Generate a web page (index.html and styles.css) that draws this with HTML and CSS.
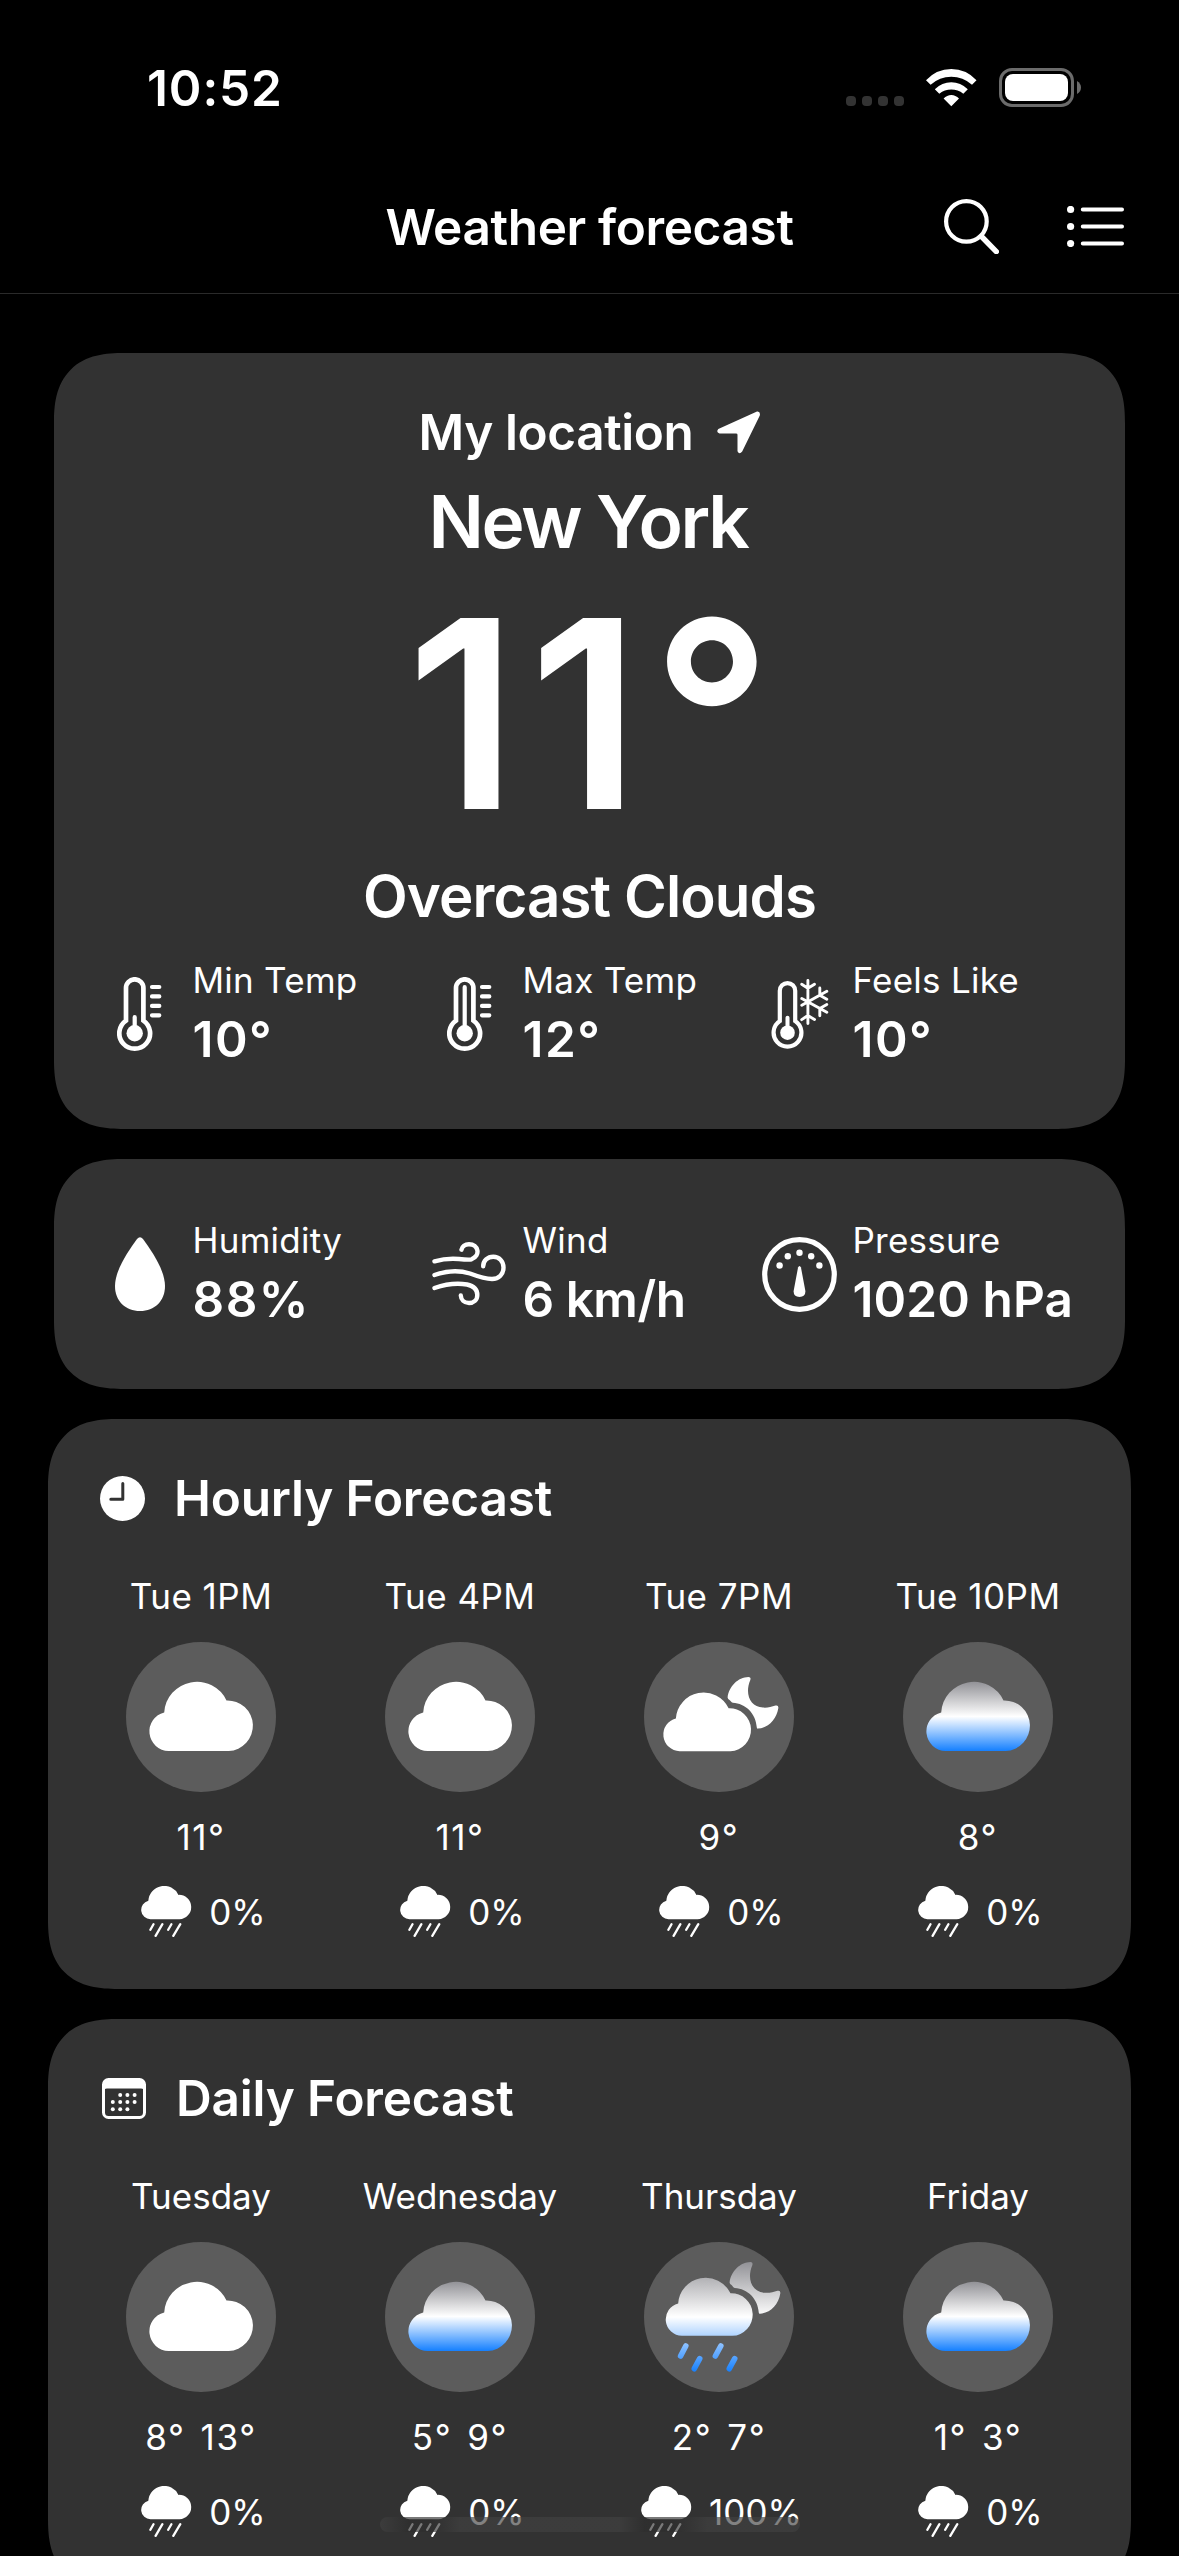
FILE: index.html
```html
<!DOCTYPE html>
<html lang="en">
<head>
<meta charset="utf-8">
<title>Weather forecast</title>
<link rel="stylesheet" href="styles.css">
</head>
<body>
<svg class="sprite" aria-hidden="true">
  <defs>
    <linearGradient id="sky" x1="0" y1="0" x2="0" y2="1">
      <stop offset="0" stop-color="#929297"/>
      <stop offset=".5" stop-color="#fff"/>
      <stop offset="1" stop-color="#1580ff"/>
    </linearGradient>
    <path id="cloud-shape" d="M19.6 69A19.6 19.6 0 0 1 15.2 30.4A32.8 32.8 0 0 1 77.5 18.4A25.3 25.3 0 0 1 79.7 69Z"/>
    <path id="moon-shape" d="M83.6 55.5C84.8 44.5 94 35 104.5 34.9Q107.3 35 106.3 38C100.5 52 106 65 119 65.6C123.5 65.9 127.5 65 131.5 63.6Q134.8 62.8 134.3 66.3C132.5 77.5 124.5 85.7 114 86.6Q112.8 86.8 112.8 85.5C112 71.5 101.5 61.5 88.8 60.8Q87.5 60.6 87 59.5Q86 58 84.2 56.9Z"/>
    <mask id="night-rain-mask" maskUnits="userSpaceOnUse" x="0" y="0" width="150" height="150">
      <g fill="#fff">
        <use href="#cloud-shape" transform="translate(21.4 35.9) scale(.84)"/>
        <use href="#moon-shape" transform="translate(2 -14.8)"/>
      </g>
      <path d="M41.8 104L36.6 114M55.7 116.7L50.3 126.7M76.8 104L71.4 114M90.7 116.7L85.3 126.7" stroke="#fff" stroke-width="5.6" stroke-linecap="round"/>
    </mask>
  </defs>
  <symbol id="cloud" viewBox="0 0 150 150"><use href="#cloud-shape" x="23" y="40"/></symbol>
  <symbol id="cloud-sky" viewBox="0 0 150 150"><use href="#cloud-shape" x="23" y="40" fill="url(#sky)"/></symbol>
  <symbol id="cloud-moon" viewBox="0 0 150 150"><use href="#cloud-shape" transform="translate(19 50.7) scale(.847)"/><use href="#moon-shape"/></symbol>
  <symbol id="night-rain" viewBox="0 0 150 150"><rect y="20" width="150" height="110" fill="url(#sky)" mask="url(#night-rain-mask)"/></symbol>
  <symbol id="rain" viewBox="0 0 51 51">
    <use href="#cloud-shape" transform="scale(.483)"/>
    <path d="M12.5 38.2L9.4 43.8M21.4 38.2L14.6 49.8M30.4 38.2L27.2 43.8M39.3 38.2L32.3 49.8" stroke="currentColor" stroke-width="2.3" stroke-linecap="round"/>
  </symbol>
</svg>

<header class="top">
  <div class="status">
    <time class="status-time">10:52</time>
    <div class="status-icons">
      <div class="signal"><i></i><i></i><i></i><i></i></div>
      <svg class="icon" width="51" height="38" viewBox="0 0 51 38"><path d="M0 11.2Q10.5 0 25.3 0T50.5 11.2L46 15.8Q37 7.8 25.3 7.8T4.6 15.8ZM8.8 20.2Q16 13.2 25.3 13.2T41.8 20.2L37.3 24.8Q32 20.6 25.3 20.6T13.3 24.8ZM17.6 29.6Q21 26 25.3 26T33 29.6L25.3 37.3Z"/></svg>
      <svg class="icon" width="82" height="39" viewBox="0 0 82 39"><rect x="1.5" y="1.5" width="72" height="36" rx="11.5" fill="none" stroke="#6b6b6b" stroke-width="3"/><rect x="6" y="6" width="63" height="27" rx="8"/><path d="M78 13Q82 15.5 82 19.5T78 26Z" fill="#6b6b6b"/></svg>
    </div>
  </div>
  <nav class="nav">
    <h1 class="nav-title">Weather forecast</h1>
    <div class="nav-actions">
      <svg class="icon icon--line" width="55" height="55" viewBox="0 0 55 55"><circle cx="22.4" cy="22.4" r="20.3" stroke-width="4.2"/><path d="M37.5 37.5L52.3 52.6" stroke-width="5.4"/></svg>
      <svg class="icon" width="57" height="41" viewBox="0 0 57 41"><circle cx="3.6" cy="3.5" r="3.6"/><circle cx="3.6" cy="20.5" r="3.6"/><circle cx="3.6" cy="37.5" r="3.6"/><path d="M15.8 3.5H55M15.8 20.5H55M15.8 37.5H55" stroke="#fff" stroke-width="4" stroke-linecap="round"/></svg>
    </div>
  </nav>
</header>

<main class="content">
  <section class="card card--inset current">
    <div class="place">
      <span class="place-label">My location</span>
      <svg class="icon" width="43" height="43" viewBox="0 0 43 43"><path d="M40 .5Q43.6 0 42.8 4.5L25.2 40.5Q22.3 44 20.5 40.3V23.8Q20.5 22.4 19 22.4H2.5Q-1.3 21 1.3 18Z"/></svg>
    </div>
    <h2 class="city">New York</h2>
    <p class="temp">11°</p>
    <p class="summary">Overcast Clouds</p>
    <div class="stats">
      <div class="stat">
        <div class="stat-icon"><svg class="icon" width="45" height="75" viewBox="0 0 45 75"><path d="M9 43.6V11A8.7 8.7 0 0 1 26.4 11V43.6A15.4 15.4 0 1 1 9 43.6Z" fill="none" stroke="#fff" stroke-width="4.7"/><circle cx="17.7" cy="56.3" r="8.2"/><path d="M17.7 40.2V56M35 10H42.3M35 19.4H42.3M35 28.9H42.3M35 38.3H42.3" stroke="#fff" stroke-width="4.2" stroke-linecap="round"/></svg></div>
        <div><div class="stat-label">Min Temp</div><div class="stat-value stat-value--wide">10°</div></div>
      </div>
      <div class="stat">
        <div class="stat-icon"><svg class="icon" width="45" height="75" viewBox="0 0 45 75"><path d="M9 43.6V11A8.7 8.7 0 0 1 26.4 11V43.6A15.4 15.4 0 1 1 9 43.6Z" fill="none" stroke="#fff" stroke-width="4.7"/><circle cx="17.7" cy="56.3" r="8.2"/><path d="M17.7 10.2V56M35 10H42.3M35 19.4H42.3M35 28.9H42.3M35 38.3H42.3" stroke="#fff" stroke-width="4.2" stroke-linecap="round"/></svg></div>
        <div><div class="stat-label">Max Temp</div><div class="stat-value stat-value--wide">12°</div></div>
      </div>
      <div class="stat">
        <div class="stat-icon"><svg class="icon" width="58" height="71" viewBox="-.5 0 58 71"><path d="M8.3 42.1V11.8A7.7 7.7 0 0 1 23.7 11.8V42.1A13.9 13.9 0 1 1 8.3 42.1Z" fill="none" stroke="#fff" stroke-width="4.2"/><circle cx="16" cy="53.7" r="7.3"/><path d="M16 38.8V53" stroke="#fff" stroke-width="4" stroke-linecap="round"/><path d="M36.4 1.5V44.5M30.2 5.2L36.4 9.3L43 5.2M30.2 40.6L36.4 36.5L43 40.6M30.3 19.5L55.3 33.3M30.3 26.3L55.3 12.3M48.3 9V16.2L55.3 20.2M48.3 36.7V29.4L55.3 25.4" fill="none" stroke="#fff" stroke-width="2.9" stroke-linecap="round" stroke-linejoin="round"/></svg></div>
        <div><div class="stat-label">Feels Like</div><div class="stat-value stat-value--wide">10°</div></div>
      </div>
    </div>
  </section>

  <section class="card card--inset details">
    <div class="stats">
      <div class="stat">
        <div class="stat-icon"><svg class="icon" width="50" height="74" viewBox="0 0 50 74"><path d="M22 2Q25 -1.5 28 2C36 13 50 33 50 49C50 64 39.5 74 25 74S0 64 0 49C0 33 14 13 22 2Z"/></svg></div>
        <div><div class="stat-label">Humidity</div><div class="stat-value stat-value--wide">88%</div></div>
      </div>
      <div class="stat">
        <div class="stat-icon"><svg class="icon icon--line" width="75" height="64" viewBox="0 0 75 64" stroke-width="4.4"><path d="M2.5 19.3C12 16.6 19 16.3 27 17C33 17.6 37 18 39.5 17.3C49 13.5 46.5 2.2 37 2.2C33 2.2 30 4.5 29.5 7.7"/><path d="M2.500 33C15 28.500 27 28 38 31.500C46 34.500 55 37 60 37C67 37 71.500 32 71.500 25.500C71.500 19 67 14.700 61.300 14.700C55.500 14.700 51.200 18.800 51.200 24.300"/><path d="M2.500 46C14 42 26 41 35 42.500C42 44 45.300 48 45.300 53C45.300 58 41.500 61 37 61C32 61 29 57.500 28.800 53.500"/></svg></div>
        <div><div class="stat-label">Wind</div><div class="stat-value stat-value--tight">6 km/h</div></div>
      </div>
      <div class="stat">
        <div class="stat-icon"><svg class="icon" width="75" height="75" viewBox="0 0 75 75"><circle cx="37.5" cy="37.5" r="34.8" fill="none" stroke="#fff" stroke-width="5.2"/><circle cx="17.6" cy="28.5" r="3.2"/><circle cx="25.8" cy="19.2" r="3.2"/><circle cx="37.5" cy="15.7" r="3.2"/><circle cx="49.2" cy="19.2" r="3.2"/><circle cx="57.4" cy="28.5" r="3.2"/><path d="M36 30.5Q37.5 27.5 39 30.5L43.4 54Q43.6 60 37.5 60T31.6 54Z"/></svg></div>
        <div><div class="stat-label">Pressure</div><div class="stat-value">1020 hPa</div></div>
      </div>
    </div>
  </section>

  <section class="card forecast">
    <div class="card-head">
      <svg class="icon" width="45" height="45" viewBox="0 0 45 45"><circle cx="22.5" cy="22.5" r="22.5"/><path d="M22.8 7.5V23.2H10.8" fill="none" stroke="#323232" stroke-width="3" stroke-linecap="round" stroke-linejoin="round"/></svg>
      <h3 class="card-title">Hourly Forecast</h3>
    </div>
    <div class="slots">
      <div class="slot"><div class="slot-label">Tue 1PM</div><svg class="weather"><use href="#cloud"/></svg><div class="slot-temps"><span>11°</span></div><div class="slot-rain"><svg class="rain"><use href="#rain"/></svg><span>0%</span></div></div>
      <div class="slot"><div class="slot-label">Tue 4PM</div><svg class="weather"><use href="#cloud"/></svg><div class="slot-temps"><span>11°</span></div><div class="slot-rain"><svg class="rain"><use href="#rain"/></svg><span>0%</span></div></div>
      <div class="slot"><div class="slot-label">Tue 7PM</div><svg class="weather"><use href="#cloud-moon"/></svg><div class="slot-temps"><span>9°</span></div><div class="slot-rain"><svg class="rain"><use href="#rain"/></svg><span>0%</span></div></div>
      <div class="slot"><div class="slot-label">Tue 10PM</div><svg class="weather"><use href="#cloud-sky"/></svg><div class="slot-temps"><span>8°</span></div><div class="slot-rain"><svg class="rain"><use href="#rain"/></svg><span>0%</span></div></div>
    </div>
  </section>

  <section class="card forecast">
    <div class="card-head card-head--daily">
      <svg class="icon" width="44" height="41" viewBox="0 0 44 41"><rect x="1.5" y="1.5" width="41" height="38" rx="5" fill="none" stroke="#fff" stroke-width="3"/><path d="M1 6Q1 1 6 1H38Q43 1 43 6V13.5Q42 10.5 39 10.5H5Q2 10.5 1 13.5Z"/><circle cx="18.2" cy="16.9" r="2"/><circle cx="25.4" cy="16.9" r="2"/><circle cx="32.6" cy="16.9" r="2"/><circle cx="10.8" cy="24.1" r="2"/><circle cx="18.2" cy="24.1" r="2"/><circle cx="25.4" cy="24.1" r="2"/><circle cx="32.6" cy="24.1" r="2"/><circle cx="10.8" cy="31.3" r="2"/><circle cx="18.2" cy="31.3" r="2"/><circle cx="25.4" cy="31.3" r="2"/></svg>
      <h3 class="card-title">Daily Forecast</h3>
    </div>
    <div class="slots">
      <div class="slot"><div class="slot-label slot-label--day">Tuesday</div><svg class="weather"><use href="#cloud"/></svg><div class="slot-temps"><span>8°</span><span>13°</span></div><div class="slot-rain"><svg class="rain"><use href="#rain"/></svg><span>0%</span></div></div>
      <div class="slot"><div class="slot-label slot-label--day">Wednesday</div><svg class="weather"><use href="#cloud-sky"/></svg><div class="slot-temps"><span>5°</span><span>9°</span></div><div class="slot-rain"><svg class="rain"><use href="#rain"/></svg><span>0%</span></div></div>
      <div class="slot"><div class="slot-label slot-label--day">Thursday</div><svg class="weather"><use href="#night-rain"/></svg><div class="slot-temps"><span>2°</span><span>7°</span></div><div class="slot-rain"><svg class="rain"><use href="#rain"/></svg><span>100%</span></div></div>
      <div class="slot"><div class="slot-label slot-label--day">Friday</div><svg class="weather"><use href="#cloud-sky"/></svg><div class="slot-temps"><span>1°</span><span>3°</span></div><div class="slot-rain"><svg class="rain"><use href="#rain"/></svg><span>0%</span></div></div>
    </div>
  </section>
</main>
<div class="home-indicator"></div>
</body>
</html>
```
FILE: styles.css
```css
* { box-sizing: border-box; }

html, body { height: 2556px; overflow: hidden; }

body {
  margin: 0;
  position: relative;
  background: #000;
  color: #fff;
  font-family: Inter, "Liberation Sans", sans-serif;
  font-size: 35px;
}

h1, h2, h3, p { margin: 0; font-weight: 600; }

.sprite { position: absolute; width: 0; height: 0; }
.icon { display: block; flex: none; fill: #fff; }
.icon--line { fill: none; stroke: #fff; stroke-linecap: round; }

/* Status bar and navigation */
.status {
  height: 175px;
  padding: 0 98px 0 147px;
  display: flex;
  align-items: center;
  justify-content: space-between;
}
.status-time { font-size: 49.5px; line-height: 60px; font-weight: 600; letter-spacing: .9px; }
.status-icons { display: flex; align-items: center; gap: 22px; }
.signal { display: flex; gap: 6px; align-self: flex-end; padding-bottom: 1px; }
.signal i { width: 10px; height: 10px; border-radius: 4px; background: #333; }

.nav {
  height: 119px;
  padding: 0 55px 15px;
  border-bottom: 1px solid #2a2a2a;
  display: grid;
  grid-template-columns: 1fr auto 1fr;
  align-items: center;
}
.nav-title { grid-column: 2; font-size: 49.5px; line-height: 60px; letter-spacing: -.36px; }
.nav-actions { display: flex; align-items: center; justify-content: flex-end; gap: 68px; }

/* Cards */
.content {
  padding: 59px 48px 0;
  display: flex;
  flex-direction: column;
  gap: 30px;
}
.card {
  background: #323232;
  border-radius: 70px;
  corner-shape: superellipse(1.35);
}
.card--inset { margin: 0 6px; }

.current {
  padding: 49px 0 60px;
  text-align: center;
}
.place { display: flex; align-items: center; justify-content: center; gap: 24px; }
.place-label { font-size: 49.5px; line-height: 60px; font-weight: 600; letter-spacing: -.4px; }
.city { margin-top: 15px; padding-right: 3px; font-size: 73px; line-height: 89px; letter-spacing: -2.4px; }
.temp { padding-left: 11px; font-size: 262.7px; line-height: 295px; letter-spacing: 11.5px; }
.summary { font-size: 58.2px; line-height: 70px; letter-spacing: -.9px; }
.current .stats { margin-top: 28px; }

.details { padding: 60px 0; }

.stats { padding-left: 48px; display: flex; text-align: left; }
.stat { width: 330px; flex: none; display: flex; align-items: center; gap: 15.5px; }
.stat-icon { width: 75px; flex: none; display: flex; justify-content: center; }
.stat-label { line-height: 43px; letter-spacing: .25px; }
.stat-value { margin-top: 7px; font-size: 49.5px; line-height: 60px; font-weight: 600; letter-spacing: .1px; white-space: nowrap; }
.stat-value--wide { letter-spacing: 1.5px; }
.stat-value--tight { letter-spacing: -.5px; }

/* Forecast cards */
.forecast { padding: 49px 23.5px 52px; }
.card-head { padding-left: 28.5px; display: flex; align-items: center; gap: 29px; }
.card-head--daily { padding-left: 30.5px; gap: 30px; }
.card-title { font-size: 49.5px; line-height: 60px; letter-spacing: -.17px; }

.slots { margin-top: 46px; display: flex; }
.slot { width: 259px; flex: none; display: flex; flex-direction: column; align-items: center; }
.slot-label { line-height: 44px; letter-spacing: .48px; }
.slot-label--day { letter-spacing: 0; }
.weather {
  width: 150px;
  height: 150px;
  margin: 24px 0 23px;
  border-radius: 50%;
  background: #5c5c5c;
  fill: #fff;
}
.slot-temps { display: flex; gap: 15px; line-height: 44px; letter-spacing: 1.6px; }
.slot-rain {
  height: 51px;
  margin: 27px -5px 0 0;
  display: flex;
  align-items: center;
  gap: 17px;
  line-height: 50px;
}
.rain { width: 51px; height: 51px; fill: #fff; color: #fff; }

/* Translucent bar over the scrolling content */
.home-indicator {
  position: absolute;
  left: 380px;
  top: 2517px;
  width: 420px;
  height: 15px;
  border-radius: 8px;
  background: linear-gradient(90deg,
    rgba(65,65,65,.66) 0, rgba(45,45,45,.64) 7%, rgba(45,45,45,.64) 12%,
    rgba(65,65,65,.66) 19%, rgba(65,65,65,.66) 57%,
    rgba(45,45,45,.64) 63%, rgba(45,45,45,.64) 70%, rgba(65,65,65,.66) 78%);
}
```
